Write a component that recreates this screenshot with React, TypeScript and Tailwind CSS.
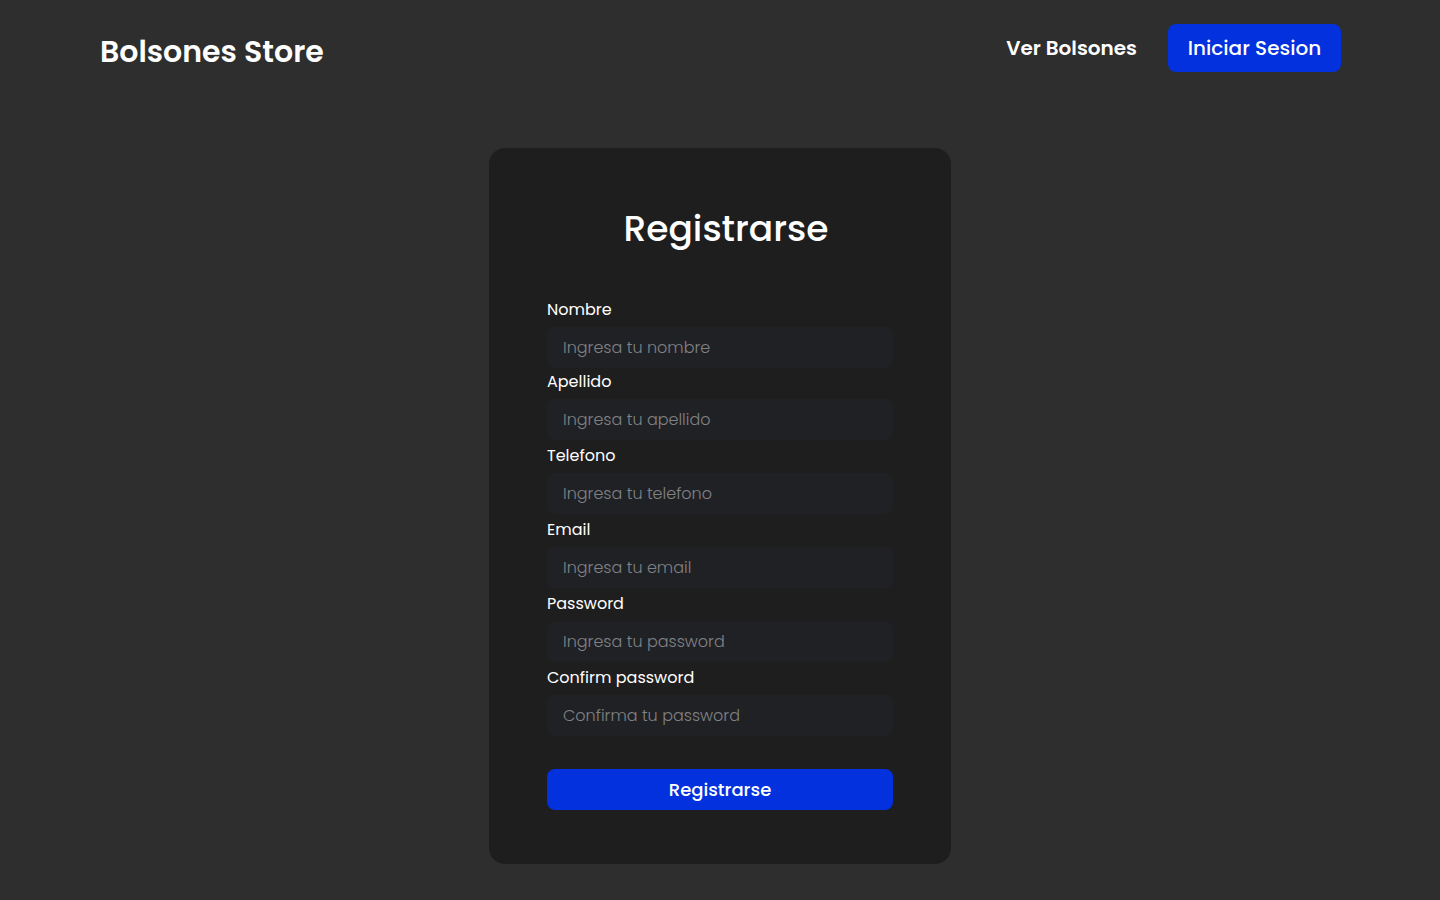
import React from "react";

const fields = [
  { label: "Nombre", placeholder: "Ingresa tu nombre", type: "text", gap: "" },
  { label: "Apellido", placeholder: "Ingresa tu apellido", type: "text", gap: "mt-[2px]" },
  { label: "Telefono", placeholder: "Ingresa tu telefono", type: "tel", gap: "mt-[4px]" },
  { label: "Email", placeholder: "Ingresa tu email", type: "email", gap: "mt-[4px]" },
  { label: "Password", placeholder: "Ingresa tu password", type: "password", gap: "mt-[4px]" },
  { label: "Confirm password", placeholder: "Confirma tu password", type: "password", gap: "mt-[4px]" },
];

function Field({ label, placeholder, type, gap }: { label: string; placeholder: string; type: string; gap: string }) {
  return (
    <div className={"flex flex-col " + gap}>
      <label className="text-[16px] leading-[24px] text-white">{label}</label>
      <input
        type={type}
        placeholder={placeholder}
        className="mt-[5px] h-[41px] w-full rounded-lg bg-[#202124] px-4 text-[16px] font-light text-white placeholder:text-[#808286] outline-none"
      />
    </div>
  );
}

export default function App() {
  return (
    <div
      className="min-h-screen w-full bg-[#2e2e2e] text-white"
      style={{ fontFamily: '"Poppins", Inter, "Noto Sans", sans-serif' }}
    >
      <header className="flex items-start justify-between pl-[100px] pr-[99px] pt-6">
        <h1 className="mt-[8px] text-[30px] font-semibold leading-[40px]">Bolsones Store</h1>
        <nav className="flex items-center gap-[31px]">
          <a href="#" className="text-[20px] font-semibold">Ver Bolsones</a>
          <button className="h-[48px] w-[173px] rounded-lg bg-[#0331de] text-[20px] font-medium">
            Iniciar Sesion
          </button>
        </nav>
      </header>

      <main className="flex justify-center pt-[76px] pb-9">
        <div className="w-[462px] rounded-2xl bg-[#1e1e1e] px-[58px] pt-[56px] pb-[54px]">
          <h2 className="text-center text-[36px] font-medium leading-[50px] pl-3">Registrarse</h2>
          <form className="mt-[44px] flex flex-col" onSubmit={(e) => e.preventDefault()}>
            {fields.map((f) => (
              <Field key={f.label} {...f} />
            ))}
            <button
              type="submit"
              className="mt-[33px] h-[41px] w-full rounded-lg bg-[#0331de] text-[18px] font-medium"
            >
              Registrarse
            </button>
          </form>
        </div>
      </main>
    </div>
  );
}
